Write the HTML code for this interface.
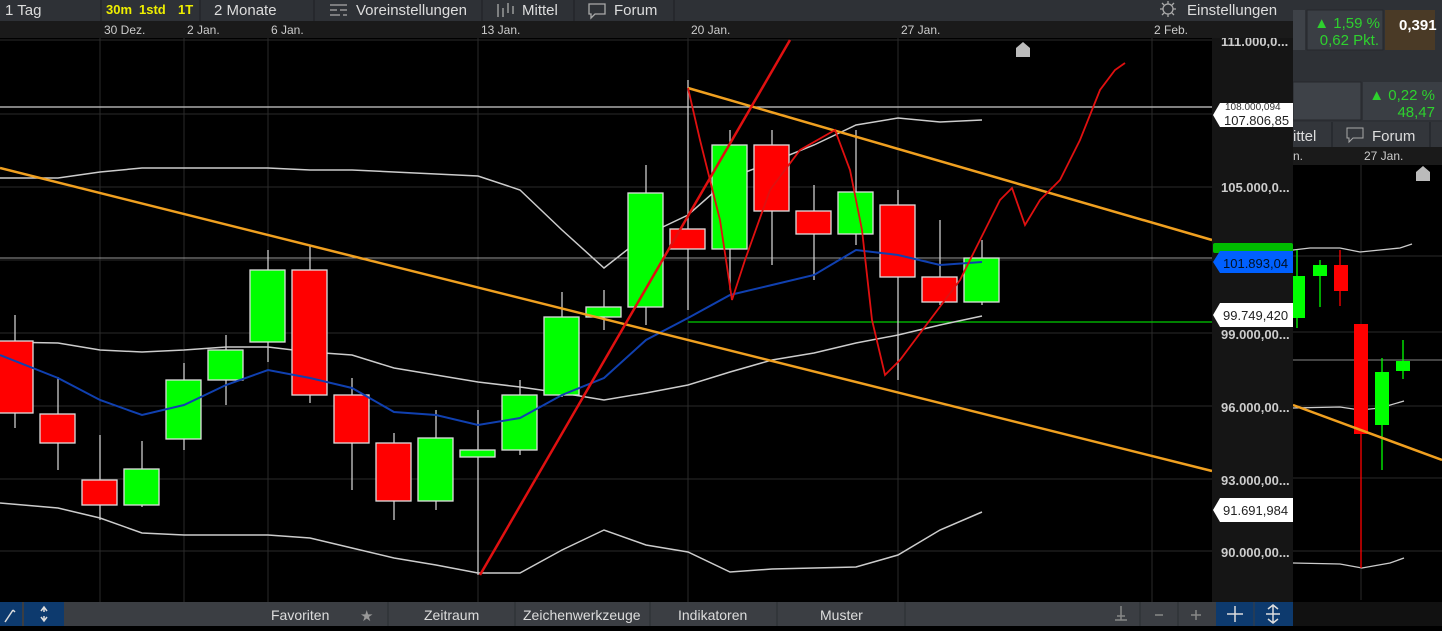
<!DOCTYPE html>
<html><head><meta charset="utf-8"><style>
body{margin:0;width:1442px;height:626px;overflow:hidden;background:#000;font-family:"Liberation Sans",sans-serif}
svg text{font-family:"Liberation Sans",sans-serif}
</style></head><body>
<svg width="1442" height="626" viewBox="0 0 1442 626" xmlns="http://www.w3.org/2000/svg">
<rect width="1442" height="626" fill="#000"/>
<rect x="1293" y="0" width="149" height="165" fill="#2e3136"/>
<rect x="1293" y="10" width="12" height="40" fill="#3e4248"/>
<rect x="1307" y="10" width="76" height="40" fill="#3a3e44" stroke="#25282c"/>
<text x="1380" y="28" fill="#2ed12e" font-size="15" text-anchor="end">▲ 1,59 %</text>
<text x="1379" y="45" fill="#2ed12e" font-size="15" text-anchor="end">0,62 Pkt.</text>
<rect x="1385" y="10" width="50" height="40" fill="#4a3a26"/>
<text x="1399" y="30" fill="#fff" font-size="15" font-weight="bold">0,391</text>
<rect x="1293" y="82" width="68" height="38" fill="#3e4248" stroke="#25282c"/>
<rect x="1363" y="82" width="79" height="38" fill="#3a3e44"/>
<text x="1435" y="100" fill="#2ed12e" font-size="15" text-anchor="end">▲ 0,22 %</text>
<text x="1435" y="117" fill="#2ed12e" font-size="15" text-anchor="end">48,47</text>
<rect x="1293" y="122" width="149" height="25" fill="#33363b"/>
<line x1="1332" y1="122" x2="1332" y2="147" stroke="#1e2024"/>
<line x1="1430" y1="122" x2="1430" y2="147" stroke="#1e2024"/>
<text x="1293" y="141" fill="#ddd" font-size="15">ittel</text>
<path d="M1347 128h16v10h-10l-4 4v-4h-2z" fill="none" stroke="#aaa"/>
<text x="1372" y="141" fill="#ddd" font-size="15">Forum</text>
<rect x="1293" y="147" width="149" height="18" fill="#1a1a1a"/>
<text x="1293" y="160" fill="#ccc" font-size="12">n.</text>
<text x="1364" y="160" fill="#ccc" font-size="12">27 Jan.</text>
<line x1="1361" y1="165" x2="1361" y2="600" stroke="#2a2a2a"/>
<line x1="1293" y1="256" x2="1442" y2="256" stroke="#2a2a2a"/>
<line x1="1293" y1="332" x2="1442" y2="332" stroke="#2a2a2a"/>
<line x1="1293" y1="406" x2="1442" y2="406" stroke="#2a2a2a"/>
<line x1="1293" y1="478" x2="1442" y2="478" stroke="#2a2a2a"/>
<line x1="1293" y1="551" x2="1442" y2="551" stroke="#2a2a2a"/>
<line x1="1293" y1="360" x2="1442" y2="360" stroke="#888"/>
<polyline points="1293,250 1310,248 1340,248 1360,252 1380,250 1400,248 1412,244" fill="none" stroke="#ccc" stroke-width="1.3"/>
<polyline points="1293,408 1340,407 1360,410 1380,408 1404,401" fill="none" stroke="#ccc" stroke-width="1.3"/>
<polyline points="1293,563 1340,564 1362,568 1390,563 1404,558" fill="none" stroke="#ccc" stroke-width="1.3"/>
<path d="M1416 181v-9l7-6 7 6v9z" fill="#bbb"/>
<line x1="1297" y1="250" x2="1297" y2="328" stroke="#0f0" stroke-width="1.3"/><rect x="1293" y="276" width="12" height="42" fill="#0f0"/>
<line x1="1320" y1="260" x2="1320" y2="307" stroke="#0f0" stroke-width="1.3"/><rect x="1313" y="265" width="14" height="11" fill="#0f0"/>
<line x1="1340" y1="250" x2="1340" y2="306" stroke="#f00" stroke-width="1.3"/><rect x="1334" y="265" width="14" height="26" fill="#f00"/>
<line x1="1361" y1="324" x2="1361" y2="568" stroke="#f00" stroke-width="1.3"/><rect x="1354" y="324" width="14" height="110" fill="#f00"/>
<line x1="1382" y1="358" x2="1382" y2="470" stroke="#0f0" stroke-width="1.3"/><rect x="1375" y="372" width="14" height="53" fill="#0f0"/>
<line x1="1403" y1="340" x2="1403" y2="379" stroke="#0f0" stroke-width="1.3"/><rect x="1396" y="361" width="14" height="10" fill="#0f0"/>
<line x1="1293" y1="405" x2="1442" y2="460" stroke="#f0a020" stroke-width="2.5"/>

<g stroke="#2a2a2a" stroke-width="1">
<line x1="0" y1="40" x2="1212" y2="40"/><line x1="0" y1="114" x2="1212" y2="114"/>
<line x1="0" y1="187" x2="1212" y2="187"/><line x1="0" y1="260" x2="1212" y2="260"/>
<line x1="0" y1="333" x2="1212" y2="333"/><line x1="0" y1="406" x2="1212" y2="406"/>
<line x1="0" y1="479" x2="1212" y2="479"/><line x1="0" y1="551" x2="1212" y2="551"/>
<line x1="100" y1="38" x2="100" y2="602"/><line x1="184" y1="38" x2="184" y2="602"/>
<line x1="268" y1="38" x2="268" y2="602"/><line x1="478" y1="38" x2="478" y2="602"/>
<line x1="688" y1="38" x2="688" y2="602"/><line x1="898" y1="38" x2="898" y2="602"/>
<line x1="1152" y1="38" x2="1152" y2="602"/>
</g>
<line x1="0" y1="107" x2="1212" y2="107" stroke="#ccc" stroke-width="1.3"/>
<line x1="0" y1="258" x2="1212" y2="258" stroke="#999" stroke-width="1"/>
<line x1="688" y1="322" x2="1212" y2="322" stroke="#0c0" stroke-width="1.3"/>

<polyline fill="none" stroke="#ccc" stroke-width="1.5" points="0,178 58,178 100,172 142,168 184,168 226,168 268,168 310,170 352,170 394,172 436,174 478,176 520,190 562,230 604,268 646,235 688,215 730,178 772,162 814,145 856,125 898,118 940,122 982,120"/>
<polyline fill="none" stroke="#ccc" stroke-width="1.5" points="0,342 58,343 100,350 142,352 184,350 226,347 268,347 310,352 352,355 394,368 436,375 478,382 520,387 562,393 604,400 646,393 688,385 730,372 772,360 814,353 856,343 898,335 940,325 982,316"/>
<polyline fill="none" stroke="#ccc" stroke-width="1.5" points="0,503 58,508 100,518 142,533 184,535 226,535 268,535 310,538 352,548 394,558 436,565 478,573 520,573 562,550 604,530 646,545 688,552 730,572 772,569 814,568 856,567 898,555 940,530 982,512"/>

<g stroke-width="1.3">
<g stroke="#ccc">
<line x1="15" y1="315" x2="15" y2="428"/><line x1="58" y1="377" x2="58" y2="470"/><line x1="100" y1="435" x2="100" y2="520"/><line x1="142" y1="441" x2="142" y2="507"/><line x1="184" y1="363" x2="184" y2="450"/><line x1="226" y1="335" x2="226" y2="405"/><line x1="268" y1="250" x2="268" y2="362"/><line x1="310" y1="245" x2="310" y2="403"/><line x1="352" y1="378" x2="352" y2="490"/><line x1="394" y1="433" x2="394" y2="520"/><line x1="436" y1="410" x2="436" y2="510"/><line x1="478" y1="410" x2="478" y2="575"/><line x1="520" y1="380" x2="520" y2="455"/><line x1="562" y1="292" x2="562" y2="397"/><line x1="604" y1="290" x2="604" y2="330"/><line x1="646" y1="165" x2="646" y2="325"/><line x1="688" y1="80" x2="688" y2="310"/><line x1="730" y1="130" x2="730" y2="290"/><line x1="772" y1="130" x2="772" y2="265"/><line x1="814" y1="185" x2="814" y2="280"/><line x1="856" y1="130" x2="856" y2="245"/><line x1="898" y1="190" x2="898" y2="380"/><line x1="940" y1="220" x2="940" y2="305"/><line x1="982" y1="240" x2="982" y2="305"/>
</g>
<g stroke="#ddd">
<rect x="-3" y="341" width="36" height="72" fill="#f00"/>
<rect x="40" y="414" width="35" height="29" fill="#f00"/>
<rect x="82" y="480" width="35" height="25" fill="#f00"/>
<rect x="124" y="469" width="35" height="36" fill="#0f0"/>
<rect x="166" y="380" width="35" height="59" fill="#0f0"/>
<rect x="208" y="350" width="35" height="30" fill="#0f0"/>
<rect x="250" y="270" width="35" height="72" fill="#0f0"/>
<rect x="292" y="270" width="35" height="125" fill="#f00"/>
<rect x="334" y="395" width="35" height="48" fill="#f00"/>
<rect x="376" y="443" width="35" height="58" fill="#f00"/>
<rect x="418" y="438" width="35" height="63" fill="#0f0"/>
<rect x="460" y="450" width="35" height="7" fill="#0f0"/>
<rect x="502" y="395" width="35" height="55" fill="#0f0"/>
<rect x="544" y="317" width="35" height="78" fill="#0f0"/>
<rect x="586" y="307" width="35" height="10" fill="#0f0"/>
<rect x="628" y="193" width="35" height="114" fill="#0f0"/>
<rect x="670" y="229" width="35" height="20" fill="#f00"/>
<rect x="712" y="145" width="35" height="104" fill="#0f0"/>
<rect x="754" y="145" width="35" height="66" fill="#f00"/>
<rect x="796" y="211" width="35" height="23" fill="#f00"/>
<rect x="838" y="192" width="35" height="42" fill="#0f0"/>
<rect x="880" y="205" width="35" height="72" fill="#f00"/>
<rect x="922" y="277" width="35" height="25" fill="#f00"/>
<rect x="964" y="258" width="35" height="44" fill="#0f0"/>
</g></g>

<polyline fill="none" stroke="#1040b0" stroke-width="2" points="0,355 58,378 100,400 142,415 184,405 226,385 268,370 310,378 352,388 394,412 436,415 478,425 520,418 562,395 604,378 646,340 688,318 730,295 772,285 814,275 856,250 898,255 940,265 982,262"/>

<line x1="0" y1="168" x2="1212" y2="471" stroke="#f0a020" stroke-width="2.5"/>
<line x1="688" y1="88" x2="1212" y2="240" stroke="#f0a020" stroke-width="2.5"/>
<line x1="480" y1="575" x2="790" y2="40" stroke="#e01010" stroke-width="2.5"/>
<polyline fill="none" stroke="#e01010" stroke-width="1.8" points="688,88 700,140 720,220 732,300 745,260 770,190 800,150 835,130 850,170 862,230 872,320 885,375 900,360 930,320 960,280 980,240 1000,200 1012,188 1025,225 1040,200 1060,180 1080,140 1100,90 1115,70 1125,63"/>
<path d="M1016 57v-9l7-6 7 6v9z" fill="#bbb"/>

<rect x="1212" y="38" width="81" height="564" fill="#151515"/>
<g fill="#ccc" font-size="13" font-weight="bold">
<text x="1221" y="46">111.000,0...</text>
<text x="1221" y="192">105.000,0...</text>
<text x="1221" y="339">99.000,00...</text>
<text x="1221" y="412">96.000,00...</text>
<text x="1221" y="485">93.000,00...</text>
<text x="1221" y="557">90.000,00...</text>
</g>
<path d="M1220 103h73v24h-73l-7-12z" fill="#fff"/>
<text x="1224" y="125" fill="#222" font-size="13">107.806,85</text>
<text x="1225" y="110" fill="#333" font-size="10">108.000,094</text>
<rect x="1213" y="243" width="80" height="10" fill="#0b0" rx="2"/>
<path d="M1220 251h73v22h-73l-7-11z" fill="#0060ff"/>
<text x="1223" y="268" fill="#012" font-size="13">101.893,04</text>
<path d="M1220 303h73v24h-73l-7-12z" fill="#fff"/>
<text x="1223" y="320" fill="#222" font-size="13">99.749,420</text>
<path d="M1220 498h73v24h-73l-7-12z" fill="#fff"/>
<text x="1223" y="515" fill="#222" font-size="13">91.691,984</text>

<rect x="0" y="0" width="1293" height="21" fill="#2e3136"/>
<rect x="0" y="21" width="1293" height="17" fill="#1a1a1a"/>
<g stroke="#1e2024"><line x1="101" y1="0" x2="101" y2="21"/><line x1="200" y1="0" x2="200" y2="21"/><line x1="314" y1="0" x2="314" y2="21"/><line x1="482" y1="0" x2="482" y2="21"/><line x1="574" y1="0" x2="574" y2="21"/><line x1="674" y1="0" x2="674" y2="21"/></g>
<g fill="#ddd" font-size="15">
<text x="5" y="15">1 Tag</text>
<text x="214" y="15">2 Monate</text>
<text x="356" y="15">Voreinstellungen</text>
<text x="522" y="15">Mittel</text>
<text x="614" y="15">Forum</text>
<text x="1187" y="15">Einstellungen</text>
</g>
<g fill="#ee0" font-size="13" font-weight="bold"><text x="106" y="14">30m</text><text x="139" y="14">1std</text><text x="178" y="14">1T</text></g>
<g stroke="#aaa" stroke-width="1.3" fill="none">
<path d="M330 5h17M330 10h7M340 10h7M330 15h10M343 15h4"/>
<path d="M498 4v13M503 8v9M508 3v10M513 6v8"/>
<path d="M589 4h16v10h-10l-4 4v-4h-2z"/>
<circle cx="1168" cy="9" r="5"/><path d="M1168 1v3M1168 14v3M1160 9h3M1173 9h3M1162 3l2 2M1172 13l2 2M1162 15l2-2M1172 5l2-2"/>
</g>
<g fill="#ccc" font-size="12"><text x="104" y="34">30 Dez.</text><text x="187" y="34">2 Jan.</text><text x="271" y="34">6 Jan.</text><text x="481" y="34">13 Jan.</text><text x="691" y="34">20 Jan.</text><text x="901" y="34">27 Jan.</text><text x="1154" y="34">2 Feb.</text></g>

<rect x="0" y="602" width="1293" height="24" fill="#3b3e43"/>
<rect x="0" y="602" width="22" height="24" fill="#0d3a6e"/>
<rect x="24" y="602" width="40" height="24" fill="#0d3a6e"/>
<rect x="1216" y="602" width="77" height="24" fill="#0d3a6e"/>
<line x1="1254" y1="602" x2="1254" y2="626" stroke="#3b3e43"/>
<rect x="1293" y="602" width="149" height="24" fill="#111"/>
<g stroke="#2a2d31"><line x1="388" y1="602" x2="388" y2="626"/><line x1="515" y1="602" x2="515" y2="626"/><line x1="650" y1="602" x2="650" y2="626"/><line x1="777" y1="602" x2="777" y2="626"/><line x1="905" y1="602" x2="905" y2="626"/><line x1="1140" y1="602" x2="1140" y2="626"/><line x1="1178" y1="602" x2="1178" y2="626"/></g>
<g fill="#ddd" font-size="14"><text x="271" y="620">Favoriten</text><text x="424" y="620">Zeitraum</text><text x="523" y="620">Zeichenwerkzeuge</text><text x="678" y="620">Indikatoren</text><text x="820" y="620">Muster</text></g>
<text x="360" y="621" fill="#999" font-size="15">★</text>
<g stroke="#ddd" stroke-width="1.5" fill="none"><path d="M5 622l8-12M13 610l2 2"/><path d="M44 608v4M44 616v4M41 611l3-4 3 4M41 617l3 4 3-4"/><path d="M1235 606v16M1227 614h16"/><path d="M1273 606v16M1268 609l5-4 5 4M1268 619l5 4 5-4M1266 614h14"/></g>
<g stroke="#888" stroke-width="1.5" fill="none"><path d="M1121 606v14M1117 616h8M1115 620h12"/><path d="M1155 615h8"/><path d="M1191 615h10M1196 610v10"/></g>
</svg>
</body></html>
